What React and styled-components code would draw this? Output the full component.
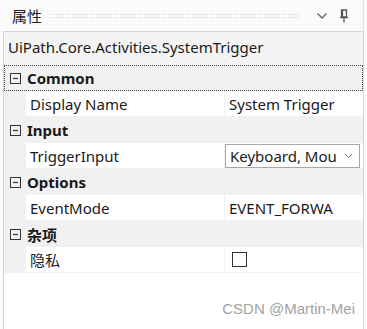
import styled, { createGlobalStyle } from "styled-components";

const GlobalStyle = createGlobalStyle`
  html, body {
    margin: 0;
    padding: 0;
    background: #fbfbfb;
  }
  body {
    font-family: "Noto Sans", "Noto Sans CJK SC", sans-serif;
    font-size: 15px;
    color: #1a1a1a;
  }
`;

const categories = [
  { name: "Common", props: [{ label: "Display Name", value: "System Trigger" }] },
  { name: "Input", props: [{ label: "TriggerInput", value: "Keyboard, Mouse", combo: true }] },
  { name: "Options", props: [{ label: "EventMode", value: "EVENT_FORWA" }] },
  { name: "杂项", props: [{ label: "隐私", check: true }] },
];

const App = () => {
  return (
    <>
      <GlobalStyle />
      <Panel>
        <TitleBar>
          <Title>属性</Title>
          <Grip />
          <TitleIcon>
            <svg width="12" height="8" viewBox="0 0 12 8">
              <path d="M1.5 1.5 L6 6 L10.5 1.5" fill="none" stroke="#666" strokeWidth="1.3" />
            </svg>
          </TitleIcon>
          <TitleIcon>
            <svg width="10" height="14" viewBox="0 0 10 14">
              <path d="M2.5 1 H7.5 V8 H2.5 Z M3.5 1 V8 M1 8.5 H9 M5 9 V13.5" fill="none" stroke="#555" strokeWidth="1.3" />
            </svg>
          </TitleIcon>
        </TitleBar>
        <Body>
          <TypeName>UiPath.Core.Activities.SystemTrigger</TypeName>
          <Grid>
            {categories.map((cat, i) => (
              <div key={cat.name}>
                <CategoryRow focused={i === 0}>
                  <Toggle>
                    <svg width="11" height="11" viewBox="0 0 11 11">
                      <rect x="0.5" y="0.5" width="10" height="10" fill="none" stroke="#333" />
                      <path d="M3 5.5 H8" stroke="#333" strokeWidth="1.2" />
                    </svg>
                  </Toggle>
                  <CategoryName>{cat.name}</CategoryName>
                </CategoryRow>
                {cat.props.map((p) => (
                  <PropRow key={p.label}>
                    <Margin />
                    <NameCell>{p.label}</NameCell>
                    <ValueCell>
                      {p.combo ? (
                        <Combo>
                          <ComboText>{p.value}</ComboText>
                          <svg width="9" height="6" viewBox="0 0 9 6">
                            <path d="M1 1 L4.5 4.5 L8 1" fill="none" stroke="#777" strokeWidth="1" />
                          </svg>
                        </Combo>
                      ) : p.check ? (
                        <Check />
                      ) : (
                        p.value
                      )}
                    </ValueCell>
                  </PropRow>
                ))}
              </div>
            ))}
          </Grid>
          <Watermark>CSDN @Martin-Mei</Watermark>
        </Body>
      </Panel>
    </>
  );
};

export default App;

const Panel = styled.div`
  width: 367px;
  height: 329px;
  display: flex;
  flex-direction: column;
  padding: 0 3px;
  box-sizing: border-box;
  background: #fbfbfb;
`;
const TitleBar = styled.div`
  height: 31px;
  display: flex;
  align-items: center;
  padding: 0 9px 0 9px;
  border-right: 1px solid #e2e2e2;
`;
const Title = styled.div`
  font-size: 15px;
  color: #1e1e1e;
  margin-right: 8px;
`;
const Grip = styled.div`
  flex: 1;
  height: 5px;
  margin-right: 10px;
  background-image: radial-gradient(circle, #c8c8c8 0.8px, transparent 1px);
  background-size: 3px 3px;
`;
const TitleIcon = styled.div`
  width: 20px;
  display: flex;
  justify-content: center;
  align-items: center;
  margin-left: 2px;
`;
const Body = styled.div`
  flex: 1;
  display: flex;
  flex-direction: column;
  border: 1px solid #d6d6d6;
  border-bottom: none;
  background: #ffffff;
  position: relative;
`;
const TypeName = styled.div`
  height: 33px;
  line-height: 30px;
  padding-left: 4px;
  background: #f4f4f4;
  font-size: 15px;
`;
const Grid = styled.div`
  display: flex;
  flex-direction: column;
  background: #ffffff;
`;
const CategoryRow = styled.div`
  height: 26px;
  display: flex;
  align-items: center;
  background: #f1f1f1;
  box-sizing: border-box;
  outline: ${(p) => (p.focused ? "1px dotted #444" : "none")};
  outline-offset: -1px;
`;
const Toggle = styled.div`
  width: 20px;
  display: flex;
  justify-content: center;
  padding-left: 1px;
`;
const CategoryName = styled.div`
  font-weight: 700;
  font-size: 15px;
  margin-left: 2px;
`;
const PropRow = styled.div`
  height: 26px;
  display: flex;
  border-bottom: 1px solid #f1f1f1;
  box-sizing: border-box;
`;
const Margin = styled.div`
  width: 22px;
  background: #f1f1f1;
`;
const NameCell = styled.div`
  width: 199px;
  padding-left: 4px;
  display: flex;
  align-items: center;
  border-right: 1px solid #f1f1f1;
  box-sizing: border-box;
`;
const ValueCell = styled.div`
  flex: 1;
  display: flex;
  align-items: center;
  padding-left: 4px;
  white-space: nowrap;
  overflow: hidden;
`;
const Combo = styled.div`
  width: 135px;
  height: 24px;
  border: 1px solid #a8a8a8;
  box-sizing: border-box;
  display: flex;
  align-items: center;
  padding: 0 6px 0 4px;
  margin-left: -4px;
`;
const ComboText = styled.div`
  flex: 1;
  overflow: hidden;
  white-space: nowrap;
  margin-right: 8px;
`;
const Check = styled.div`
  width: 15px;
  height: 15px;
  border: 1px solid #333;
  box-sizing: border-box;
  margin-left: 3px;
`;
const Watermark = styled.div`
  position: absolute;
  right: 8px;
  bottom: 12px;
  font-family: "Liberation Sans", Arial, sans-serif;
  font-size: 15px;
  color: #a3a3a3;
`;
